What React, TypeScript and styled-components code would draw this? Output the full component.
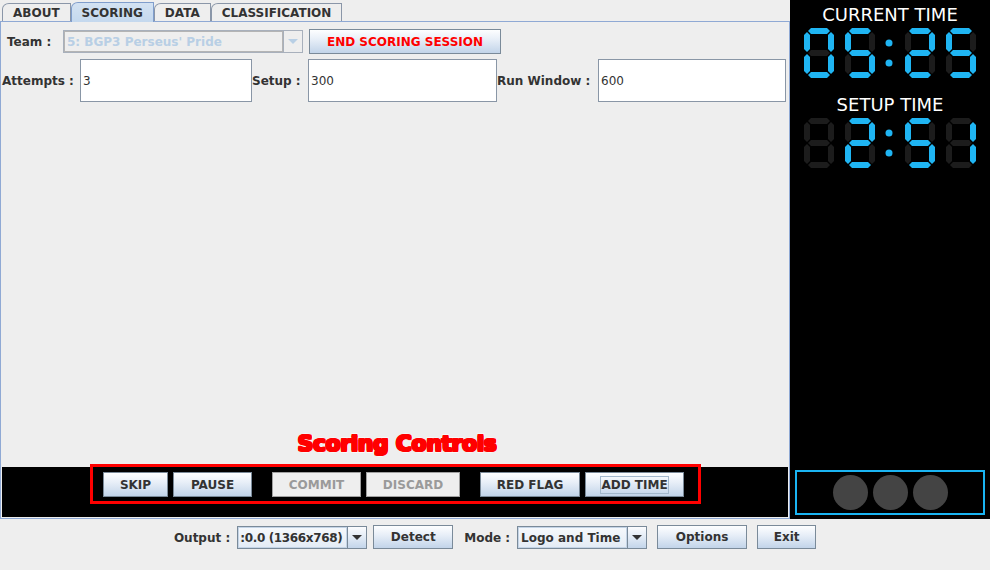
import React from "react"
import styled, { createGlobalStyle } from "styled-components"

const GlobalStyle = createGlobalStyle`
    html, body {
        margin: 0;
        padding: 0;
        background: #eeeeee;
        font-family: "DejaVu Sans", "Liberation Sans", sans-serif;
    }
`

const Screen = styled.div`
    width: 990px;
    height: 570px;
    display: flex;
    flex-direction: column;
    background: #eeeeee;
    overflow: hidden;
`

const Main = styled.div`
    display: flex;
    height: 519px;
`

const LeftPane = styled.div`
    width: 790px;
    display: flex;
    flex-direction: column;
`

const TabStrip = styled.div`
    display: flex;
    align-items: flex-end;
    height: 21px;
    padding-left: 2px;
    box-sizing: border-box;
`

const Tab = styled.div<{ $active?: boolean }>`
    height: ${p => (p.$active ? "20px" : "18px")};
    margin-bottom: ${p => (p.$active ? "-1px" : "0")};
    position: relative;
    z-index: ${p => (p.$active ? 2 : 0)};
    box-sizing: border-box;
    padding: 0 10px 0 10px;
    display: flex;
    align-items: center;
    font-size: 12px;
    font-weight: bold;
    color: #333333;
    border: 1px solid ${p => (p.$active ? "#7f9dcc" : "#8a96a8")};
    border-bottom: none;
    border-top-left-radius: 7px 6px;
    background: ${p => (p.$active ? "linear-gradient(#d3e2f2, #c4d8ee)" : "#eeeeee")};
`

const Panel = styled.div`
    flex: 1;
    display: flex;
    flex-direction: column;
    border: 1px solid #8fa9d4;
    padding: 1px;
    box-sizing: border-box;
`

const TeamRow = styled.div`
    display: flex;
    align-items: center;
    margin-top: 6px;
    padding-left: 5px;
    height: 25px;
`

const Label = styled.span`
    font-size: 12px;
    font-weight: bold;
    color: #333333;
    white-space: nowrap;
`

const TeamLabel = styled(Label)`
    width: 56px;
`

const Combo = styled.div<{ $w: number; $disabled?: boolean }>`
    width: ${p => p.$w}px;
    height: 23px;
    box-sizing: border-box;
    display: flex;
    border: 1px solid ${p => (p.$disabled ? "#a8b0bc" : "#7a8a99")};
    background: ${p => (p.$disabled ? "#eeeeee" : "linear-gradient(#f6f9fc, #e3ebf5)")};
`

const ComboValue = styled.div<{ $disabled?: boolean; $tight?: boolean }>`
    flex: 1;
    display: flex;
    align-items: center;
    padding-left: ${p => (p.$tight ? "1px" : "2px")};
    font-size: 12px;
    font-weight: bold;
    letter-spacing: ${p => (p.$tight ? "-0.35px" : "0")};
    color: ${p => (p.$disabled ? "#b8cfe5" : "#333333")};
    border: 1px solid ${p => (p.$disabled ? "#b4b4b4" : "#c4d4e6")};
    white-space: nowrap;
    overflow: hidden;
`

const ComboArrow = styled.div<{ $disabled?: boolean }>`
    width: 18px;
    display: flex;
    align-items: center;
    justify-content: center;
    border-left: 1px solid ${p => (p.$disabled ? "#a8b0bc" : "#7a8a99")};
    background: ${p => (p.$disabled ? "#eeeeee" : "linear-gradient(#fbfcfe, #e4ecf6 45%, #c3d5ea)")};

    &::after {
        content: "";
        border-left: 5px solid transparent;
        border-right: 5px solid transparent;
        border-top: 5px solid ${p => (p.$disabled ? "#b8cfe5" : "#333333")};
    }
`

const Button = styled.button<{ $danger?: boolean; $w?: number }>`
    height: 25px;
    ${p => (p.$w ? `width: ${p.$w}px;` : "")}
    box-sizing: border-box;
    padding: 0 16px;
    font-family: "DejaVu Sans", sans-serif;
    font-size: 12px;
    font-weight: bold;
    color: ${p => (p.$danger ? "#ff0000" : "#333333")};
    border: 1px solid #7a8a99;
    border-radius: 0;
    background: linear-gradient(#fdfeff 0%, #e8eff8 40%, #c2d4e9 100%);
    display: flex;
    align-items: center;
    justify-content: center;
    white-space: nowrap;

    &:disabled {
        color: #9a9a9a;
        background: #eeeeee;
        border-color: #a0a0a0;
    }
`

const FocusRing = styled.span`
    border: 1px solid #a3b8cc;
    padding: 1px 0;
    margin: 0 -1px;
`

const FieldsRow = styled.div`
    display: grid;
    grid-template-columns: 78px 172px 56px 189px 101px 188px;
    align-items: center;
    margin-top: 5px;
    height: 43px;
`

const TextField = styled.div`
    height: 43px;
    box-sizing: border-box;
    background: #ffffff;
    border: 1px solid #8996a6;
    padding-left: 2px;
    display: flex;
    align-items: center;
    font-size: 12px;
    color: #333333;
`

const Spacer = styled.div`
    flex: 1;
`

const Annotation = styled.div`
    text-align: center;
    font-size: 22px;
    line-height: 26px;
    font-weight: bold;
    letter-spacing: -0.4px;
    color: #ff0000;
    -webkit-text-stroke: 3px #ffffff;
    paint-order: stroke fill;
    text-shadow: 1px 0 #ff0000, -1px 0 #ff0000, 0 1px #ff0000, 0 -1px #ff0000,
        1px 1px #ff0000, -1px -1px #ff0000, 1px -1px #ff0000, -1px 1px #ff0000;
    margin-bottom: 10px;
    padding-left: 4px;
`

const ControlBar = styled.div`
    position: relative;
    height: 50px;
    background: #000000;
    display: flex;
    justify-content: center;
    align-items: flex-start;
    padding: 5px 3px 0 0;
    box-sizing: border-box;
`

const ButtonGroup = styled.div`
    display: flex;
    gap: 5px;
    margin: 0 10px;
`

const Highlight = styled.div`
    position: absolute;
    left: 88px;
    top: -3px;
    width: 611px;
    height: 40px;
    box-sizing: border-box;
    border: 3px solid #ff0000;
    pointer-events: none;
`

const ClockPane = styled.div`
    width: 200px;
    background: #000000;
    display: flex;
    flex-direction: column;
    align-items: center;
`

const ClockTitle = styled.div<{ $top: number }>`
    margin-top: ${p => p.$top}px;
    font-size: 18px;
    line-height: 20px;
    color: #ffffff;
`

const ClockFace = styled.svg`
    display: block;
    margin-top: 3px;
`

const LampBox = styled.div`
    align-self: stretch;
    margin: 0 5px 4px;
    height: 45px;
    box-sizing: border-box;
    border: 2px solid #1ab4f2;
    display: flex;
    justify-content: center;
    align-items: center;
    gap: 5px;
`

const Lamp = styled.div`
    width: 35px;
    height: 35px;
    border-radius: 50%;
    background: #444444;
`

const BottomBar = styled.div`
    flex: 1;
    display: flex;
    justify-content: center;
    align-items: flex-start;
    padding-top: 6px;
    gap: 6px;
`

const BarLabel = styled(Label)<{ $lead?: number }>`
    margin-left: ${p => p.$lead || 0}px;
    margin-right: 1px;
    height: 25px;
    display: flex;
    align-items: center;
`

const BarCombo = styled(Combo)`
    margin-top: 1px;
`

const BarButton = styled(Button)<{ $lead?: number }>`
    margin-left: ${p => p.$lead || 0}px;
    height: 24px;
    padding: 0;
`

const LIT = "#1fb5f3"
const DIM = "#1c1c1c"

const SEGMENTS: Record<string, string> = {
    "0": "abcdef",
    "1": "bc",
    "2": "abged",
    "3": "abgcd",
    "4": "fgbc",
    "5": "afgcd",
    "6": "afgedc",
    "7": "abc",
    "8": "abcdefg",
    "9": "abcdfg",
    " ": "",
}

const T = 6
const W = 30
const H = 50

const hSeg = (x1: number, x2: number, cy: number) =>
    `${x1},${cy} ${x1 + T / 2},${cy - T / 2} ${x2 - T / 2},${cy - T / 2} ${x2},${cy} ${x2 - T / 2},${cy + T / 2} ${x1 + T / 2},${cy + T / 2}`

const vSeg = (cx: number, y1: number, y2: number) =>
    `${cx},${y1} ${cx + T / 2},${y1 + T / 2} ${cx + T / 2},${y2 - T / 2} ${cx},${y2} ${cx - T / 2},${y2 - T / 2} ${cx - T / 2},${y1 + T / 2}`

const L = T / 2
const R = W - T / 2
const TOP = T / 2
const MID = H / 2
const BOT = H - T / 2

const SEG_SHAPES: Record<string, string> = {
    a: hSeg(L + 1, R - 1, TOP),
    g: hSeg(L + 1, R - 1, MID),
    d: hSeg(L + 1, R - 1, BOT),
    f: vSeg(L, TOP + 1, MID - 1),
    b: vSeg(R, TOP + 1, MID - 1),
    e: vSeg(L, MID + 1, BOT - 1),
    c: vSeg(R, MID + 1, BOT - 1),
}

const Digit = ({ value, x }: { value: string; x: number }) => {
    const on = SEGMENTS[value] || ""
    return (
        <g transform={`translate(${x},0)`}>
            {Object.keys(SEG_SHAPES).map(k => (
                <polygon key={k} points={SEG_SHAPES[k]} fill={on.includes(k) ? LIT : DIM} />
            ))}
        </g>
    )
}

// text like " 2:51" — a blank leading digit shows all segments dark
const SevenSegClock = ({ text }: { text: string }) => {
    const [m, s] = text.split(":")
    return (
        <ClockFace width={200} height={50} viewBox="0 0 200 50">
            <Digit value={m[0]} x={14} />
            <Digit value={m[1]} x={55} />
            <circle cx={99} cy={15} r={3.5} fill={LIT} />
            <circle cx={99} cy={35} r={3.5} fill={LIT} />
            <Digit value={s[0]} x={115} />
            <Digit value={s[1]} x={156} />
        </ClockFace>
    )
}

const tabs = ["ABOUT", "SCORING", "DATA", "CLASSIFICATION"]

const App = () => {
    return (
        <Screen>
            <GlobalStyle />
            <Main>
                <LeftPane>
                    <TabStrip>
                        {tabs.map(t => (
                            <Tab key={t} $active={t === "SCORING"}>{t}</Tab>
                        ))}
                    </TabStrip>
                    <Panel>
                        <TeamRow>
                            <TeamLabel>Team :</TeamLabel>
                            <Combo $w={240} $disabled>
                                <ComboValue $disabled>5: BGP3 Perseus' Pride</ComboValue>
                                <ComboArrow $disabled />
                            </Combo>
                            <Button $danger $w={192} style={{ marginLeft: 6 }}>END SCORING SESSION</Button>
                        </TeamRow>
                        <FieldsRow>
                            <Label>Attempts :</Label>
                            <TextField>3</TextField>
                            <Label>Setup :</Label>
                            <TextField>300</TextField>
                            <Label>Run Window :</Label>
                            <TextField>600</TextField>
                        </FieldsRow>
                        <Spacer />
                        <Annotation>Scoring Controls</Annotation>
                        <ControlBar>
                            <Highlight />
                            <ButtonGroup>
                                <Button $w={65}>SKIP</Button>
                                <Button $w={79}>PAUSE</Button>
                            </ButtonGroup>
                            <ButtonGroup>
                                <Button $w={89} disabled>COMMIT</Button>
                                <Button $w={94} disabled>DISCARD</Button>
                            </ButtonGroup>
                            <ButtonGroup>
                                <Button $w={100}>RED FLAG</Button>
                                <Button $w={99}><FocusRing>ADD TIME</FocusRing></Button>
                            </ButtonGroup>
                        </ControlBar>
                    </Panel>
                </LeftPane>
                <ClockPane>
                    <ClockTitle $top={5}>CURRENT TIME</ClockTitle>
                    <SevenSegClock text="05:25" />
                    <ClockTitle $top={17}>SETUP TIME</ClockTitle>
                    <SevenSegClock text=" 2:51" />
                    <Spacer />
                    <LampBox>
                        <Lamp />
                        <Lamp />
                        <Lamp />
                    </LampBox>
                </ClockPane>
            </Main>
            <BottomBar>
                <BarLabel>Output :</BarLabel>
                <BarCombo $w={130}>
                    <ComboValue $tight>:0.0 (1366x768)</ComboValue>
                    <ComboArrow />
                </BarCombo>
                <BarButton $w={80}>Detect</BarButton>
                <BarLabel $lead={5}>Mode :</BarLabel>
                <BarCombo $w={130}>
                    <ComboValue>Logo and Time</ComboValue>
                    <ComboArrow />
                </BarCombo>
                <BarButton $w={90} $lead={4}>Options</BarButton>
                <BarButton $w={59} $lead={4}>Exit</BarButton>
            </BottomBar>
        </Screen>
    )
}

export default App
